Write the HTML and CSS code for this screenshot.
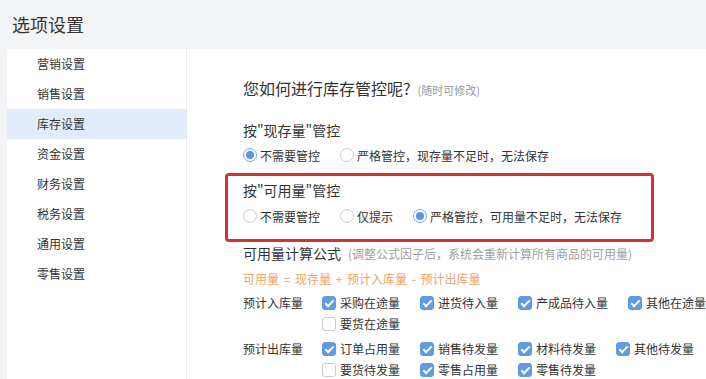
FILE: index.html
```html
<!DOCTYPE html>
<html lang="zh-CN">
<head>
    <meta charset="UTF-8">
    <meta name="viewport" content="width=device-width, initial-scale=1.0">
    <title>选项设置</title>
    <link rel="stylesheet" href="styles.css">
</head>
<body>
    <header class="top-bar">
        <h1>选项设置</h1>
    </header>

    <div class="layout">
        <nav class="side-menu">
            <a class="menu-item">营销设置</a>
            <a class="menu-item">销售设置</a>
            <a class="menu-item active">库存设置</a>
            <a class="menu-item">资金设置</a>
            <a class="menu-item">财务设置</a>
            <a class="menu-item">税务设置</a>
            <a class="menu-item">通用设置</a>
            <a class="menu-item">零售设置</a>
        </nav>

        <main class="content">
            <h2 class="question">您如何进行库存管控呢?<span class="question-note">(随时可修改)</span></h2>

            <div class="group-title first">按"现存量"管控</div>
            <div class="radio-row">
                <label class="radio checked"><span class="dot"></span>不需要管控</label>
                <label class="radio"><span class="dot"></span>严格管控，现存量不足时，无法保存</label>
            </div>

            <div class="highlight-box">
                <div class="group-title">按"可用量"管控</div>
                <div class="radio-row">
                    <label class="radio"><span class="dot"></span>不需要管控</label>
                    <label class="radio"><span class="dot"></span>仅提示</label>
                    <label class="radio checked"><span class="dot"></span>严格管控，可用量不足时，无法保存</label>
                </div>
            </div>

            <div class="formula-title">可用量计算公式<span class="formula-note">(调整公式因子后，系统会重新计算所有商品的可用量)</span></div>
            <div class="formula">可用量 = 现存量 + 预计入库量 - 预计出库量</div>

            <div class="factor-group">
                <div class="factor-label">预计入库量</div>
                <div class="factor-rows">
                    <div class="check-row">
                        <label class="check checked"><span class="box"></span>采购在途量</label>
                        <label class="check checked"><span class="box"></span>进货待入量</label>
                        <label class="check checked"><span class="box"></span>产成品待入量</label>
                        <label class="check checked"><span class="box"></span>其他在途量</label>
                    </div>
                    <div class="check-row">
                        <label class="check"><span class="box"></span>要货在途量</label>
                    </div>
                </div>
            </div>

            <div class="factor-group">
                <div class="factor-label">预计出库量</div>
                <div class="factor-rows">
                    <div class="check-row">
                        <label class="check checked"><span class="box"></span>订单占用量</label>
                        <label class="check checked"><span class="box"></span>销售待发量</label>
                        <label class="check checked"><span class="box"></span>材料待发量</label>
                        <label class="check checked"><span class="box"></span>其他待发量</label>
                    </div>
                    <div class="check-row">
                        <label class="check"><span class="box"></span>要货待发量</label>
                        <label class="check checked"><span class="box"></span>零售占用量</label>
                        <label class="check checked"><span class="box"></span>零售待发量</label>
                    </div>
                </div>
            </div>
        </main>
    </div>
</body>
</html>
```

FILE: styles.css
```css
body {
    font-family: "Noto Sans CJK SC", "Noto Sans", sans-serif;
    margin: 0;
    padding: 0;
    background-color: #f3f4f6;
    color: #333;
    overflow: hidden;
}

.top-bar {
    height: 48px;
    display: flex;
    align-items: center;
    padding-left: 12px;
}

.top-bar h1 {
    margin: 0;
    font-size: 18px;
    font-weight: normal;
    color: #333;
}

.layout {
    display: flex;
    margin-left: 7px;
    margin-top: 1px;
    height: 330px;
}

.side-menu {
    width: 179px;
    background-color: #fff;
    border-right: 1px solid #e8e9ec;
    display: flex;
    flex-direction: column;
}

.menu-item {
    height: 30px;
    line-height: 30px;
    padding-left: 30px;
    font-size: 12px;
    color: #333;
}

.menu-item.active {
    background-color: #e1ebf9;
}

.content {
    flex: 1;
    background-color: #fff;
    padding-left: 56px;
    padding-top: 27px;
}

.question {
    margin: 0;
    font-size: 16px;
    line-height: 24px;
    font-weight: normal;
    color: #333;
}

.question-note {
    font-size: 11px;
    color: #999;
    margin-left: 7px;
}

.group-title {
    font-size: 14px;
    line-height: 20px;
    color: #333;
}

.group-title.first {
    margin-top: 18px;
}

.radio-row {
    display: flex;
    gap: 20px;
    margin-top: 5px;
    height: 20px;
}

.radio {
    display: flex;
    align-items: center;
    gap: 3px;
    font-size: 12px;
    color: #333;
}

.radio .dot {
    width: 12px;
    height: 12px;
    border: 1px solid #c9cbd0;
    border-radius: 50%;
    background-color: #fff;
    box-sizing: content-box;
    position: relative;
}

.radio.checked .dot {
    border-color: #7aa7e3;
}

.radio.checked .dot::after {
    content: "";
    position: absolute;
    top: 2px;
    left: 2px;
    width: 8px;
    height: 8px;
    border-radius: 50%;
    background-color: #5b94e0;
}

.highlight-box {
    margin: 8px 0 0 -18px;
    width: 393px;
    border: 3px solid #cf3431;
    border-radius: 4px;
    padding: 4px 15px 13px;
}

.highlight-box .radio-row {
    margin-top: 6px;
}

.formula-title {
    margin-top: 1px;
    font-size: 14px;
    line-height: 20px;
    color: #333;
}

.formula-note {
    font-size: 12px;
    color: #a0a0a0;
    margin-left: 7px;
}

.formula {
    margin-top: 6px;
    font-size: 12px;
    line-height: 18px;
    color: #f0a46a;
    word-spacing: 2px;
}

.factor-group {
    display: flex;
    margin-top: 4px;
}

.factor-label {
    width: 79px;
    font-size: 12px;
    line-height: 21px;
    color: #333;
}

.check-row {
    display: flex;
    gap: 20px;
    height: 21px;
}

.check {
    display: flex;
    align-items: center;
    gap: 4px;
    font-size: 12px;
    color: #333;
    white-space: nowrap;
}

.check .box {
    width: 12px;
    height: 12px;
    border: 1px solid #c9cbd0;
    border-radius: 3px;
    background-color: #fff;
    position: relative;
}

.check.checked .box {
    border-color: #5f9ae3;
    background-color: #5f9ae3;
}

.check.checked .box::after {
    content: "";
    position: absolute;
    left: 4px;
    top: 1px;
    width: 3px;
    height: 7px;
    border: solid #fff;
    border-width: 0 2px 2px 0;
    transform: rotate(45deg);
}
```
